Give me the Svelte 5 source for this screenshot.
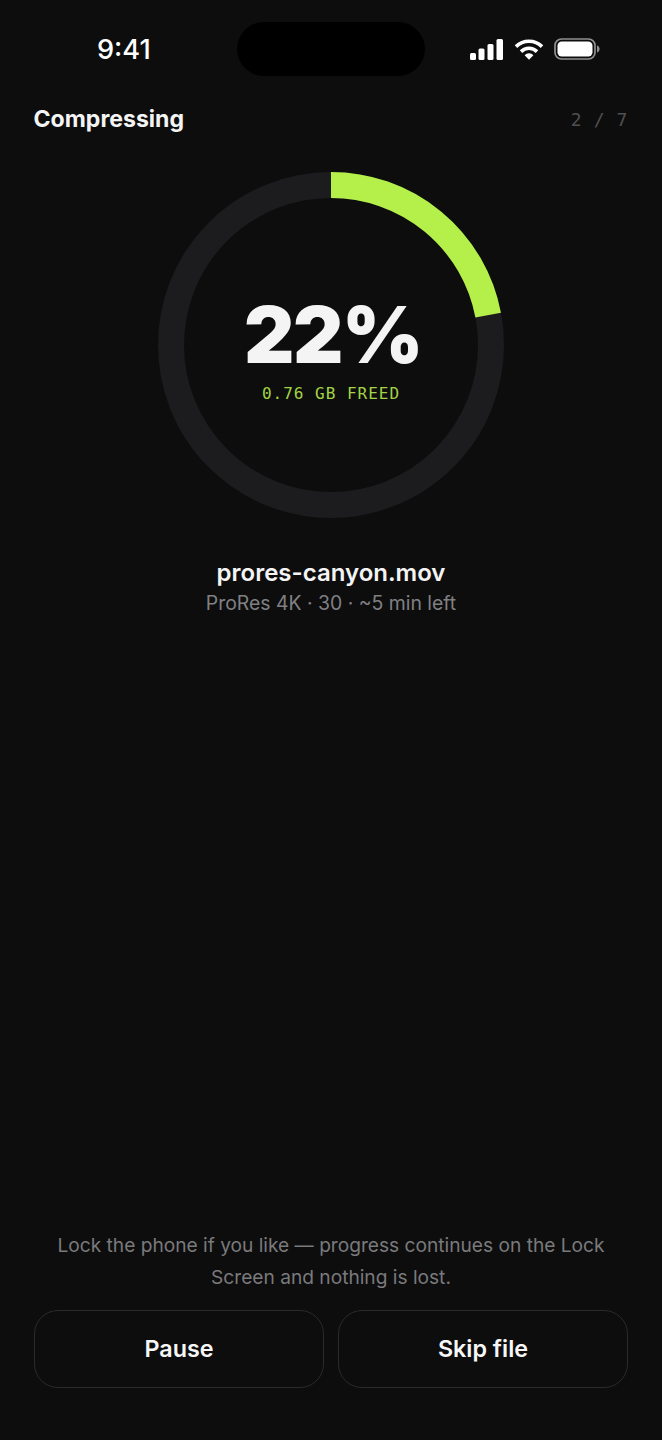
<script lang="ts">
  const percent = 22;
  const radius = 160;
  const circumference = 2 * Math.PI * radius;
  const dash = (circumference * percent) / 100;
</script>

<div class="screen">
  <header class="status">
    <span class="time">9:41</span>
    <div class="island"></div>
    <div class="status-icons">
      <svg width="34" height="21" viewBox="0 0 34 21" fill="#fff">
        <rect x="0" y="14" width="6" height="7" rx="1.5" />
        <rect x="8.5" y="9.5" width="6" height="11.5" rx="1.5" />
        <rect x="17.5" y="5" width="6" height="16" rx="1.5" />
        <rect x="26.5" y="0" width="6.5" height="21" rx="1.5" />
      </svg>
      <svg width="30" height="21" viewBox="0 0 30 21" fill="none" stroke="#fff" stroke-width="3.6">
        <path d="M2 7.6a18.6 18.6 0 0 1 26 0" />
        <path d="M7 12.6a11.4 11.4 0 0 1 16 0" />
        <path d="M15 20.8l-4.4-4.6a6.2 6.2 0 0 1 8.8 0z" fill="#fff" stroke="none" />
      </svg>
      <svg width="46" height="22" viewBox="0 0 46 22" fill="none">
        <rect x="1" y="1" width="40" height="20" rx="6.5" stroke="#8f8f8f" stroke-width="1.7" />
        <rect x="3.5" y="3.5" width="35" height="15" rx="4.2" fill="#fff" />
        <path d="M43 7.5c1.8.6 2.6 2 2.6 3.5s-.8 2.9-2.6 3.5z" fill="#8f8f8f" />
      </svg>
    </div>
  </header>

  <div class="title-row">
    <span class="title">Compressing</span>
    <span class="count">2 / 7</span>
  </div>

  <div class="ring">
    <svg width="346" height="346" viewBox="0 0 346 346" fill="none">
      <circle cx="173" cy="173" r={radius} stroke="#1c1c1e" stroke-width="26" />
      <circle
        cx="173"
        cy="173"
        r={radius}
        stroke="#b5f04a"
        stroke-width="26"
        stroke-dasharray="{dash} {circumference}"
        transform="rotate(-90 173 173)"
      />
    </svg>
    <div class="ring-label">
      <span class="percent">{percent}%</span>
      <span class="freed">0.76 GB FREED</span>
    </div>
  </div>

  <div class="file">
    <span class="file-name">prores-canyon.mov</span>
    <span class="file-meta">ProRes 4K · 30 · ~5 min left</span>
  </div>

  <div class="bottom">
    <p class="note">Lock the phone if you like — progress continues on the Lock Screen and nothing is lost.</p>
    <div class="actions">
      <button class="action">Pause</button>
      <button class="action">Skip file</button>
    </div>
  </div>
</div>

<style>
  :global(body) {
    margin: 0;
    background: #0d0d0e;
  }

  .screen {
    width: 662px;
    height: 1440px;
    display: flex;
    flex-direction: column;
    background: #0d0d0e;
    color: #f4f4f4;
    font-family: Inter, "Noto Sans", sans-serif;
    overflow: hidden;
  }

  .status {
    position: relative;
    height: 98px;
    flex: none;
  }

  .time {
    position: absolute;
    left: 97px;
    top: 34px;
    font-size: 27.2px;
    line-height: 32px;
    font-weight: 500;
    color: #fff;
  }

  .island {
    position: absolute;
    left: 237px;
    top: 22px;
    width: 188px;
    height: 54px;
    border-radius: 27px;
    background: #000;
  }

  .status-icons {
    position: absolute;
    left: 470px;
    top: 38px;
    display: flex;
    align-items: center;
    gap: 10px;
  }

  .title-row {
    display: flex;
    justify-content: space-between;
    align-items: center;
    height: 42px;
    padding: 0 34px 0 33.5px;
    box-sizing: border-box;
    flex: none;
  }

  .title {
    font-size: 23.1px;
    font-weight: 700;
    color: #f4f4f4;
  }

  .count {
    font-family: "DejaVu Sans Mono", monospace;
    font-size: 18px;
    letter-spacing: 0.6px;
    color: #505051;
  }

  .ring {
    position: relative;
    width: 346px;
    height: 346px;
    margin: 32px auto 0;
    flex: none;
  }

  .ring svg {
    display: block;
  }

  .ring-label {
    position: absolute;
    inset: 0;
    display: flex;
    flex-direction: column;
    align-items: center;
    justify-content: center;
  }

  .percent {
    margin: 3px 0 0 4px;
    font-size: 78px;
    line-height: 90px;
    font-weight: 900;
    letter-spacing: -1.5px;
    color: #f4f4f4;
  }

  .freed {
    margin-top: 4px;
    font-family: "DejaVu Sans Mono", monospace;
    font-size: 16px;
    letter-spacing: 1px;
    color: #a3d444;
  }

  .file {
    display: flex;
    flex-direction: column;
    align-items: center;
    margin-top: 40px;
    flex: none;
  }

  .file-name {
    font-size: 24px;
    line-height: 30px;
    font-weight: 600;
    color: #f4f4f4;
  }

  .file-meta {
    font-size: 19.4px;
    line-height: 30px;
    color: #808083;
  }

  .bottom {
    margin-top: auto;
    padding: 0 34px 52px;
    flex: none;
  }

  .note {
    margin: 0 0 17px;
    font-size: 19.15px;
    line-height: 32px;
    text-align: center;
    color: #7a7a7c;
  }

  .actions {
    display: flex;
    gap: 14px;
  }

  .action {
    flex: 1;
    height: 78px;
    padding: 0 0 2px;
    border: 1.5px solid #2a2a2b;
    border-radius: 24px;
    background: transparent;
    color: #f7f7f7;
    font-family: inherit;
    font-size: 23.3px;
    font-weight: 600;
  }
</style>
